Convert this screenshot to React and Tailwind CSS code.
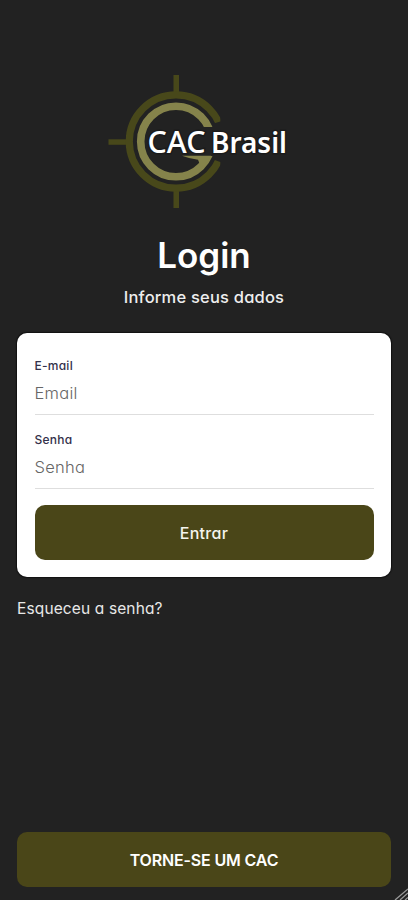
function Logo() {
  return (
    <svg className="block h-[144px] w-[192px]" viewBox="104 70 192 144" role="img" aria-label="CAC Brasil">
      <defs>
        <clipPath id="outerGap">
          <path d="M104 70H220.3V121.5L212 124H176V159H212L220.3 162V214H104Z" />
        </clipPath>
        <clipPath id="innerGap">
          <path d="M104 70H296V127H176V156H296V214H104Z" />
        </clipPath>
      </defs>
      <g fill="#48481a">
        <rect x="173.5" y="75" width="5.5" height="18" />
        <rect x="173.5" y="190" width="5.5" height="18" />
        <rect x="108.5" y="139.3" width="18" height="5.5" />
      </g>
      <circle cx="176" cy="141.5" r="46.7" fill="none" stroke="#48481a" strokeWidth="7.2" clipPath="url(#outerGap)" />
      <circle cx="176" cy="141.5" r="35.3" fill="none" stroke="#85834b" strokeWidth="7.6" clipPath="url(#innerGap)" />
      <g fill="#fff" stroke="#1b1b1b" strokeWidth="3" paintOrder="stroke" className="font-['Noto_Sans',sans-serif] text-[30px] font-medium">
        <text x="147.5" y="153.2" textLength="58" lengthAdjust="spacingAndGlyphs">CAC</text>
        <text x="211" y="153.2" textLength="76" lengthAdjust="spacingAndGlyphs" className="text-[29.5px] font-semibold">Brasil</text>
      </g>
      <path d="M182 155.8H211L208 162L201 167L198 159.8Q190 159 182 155.8Z" fill="#85834b" />
    </svg>
  );
}

function Field({ label, type, placeholder }) {
  return (
    <label className="block h-[74px] border-b border-[#dedede] pt-[17px]">
      <span className="block h-[16px] text-[12px] leading-[16px] font-medium tracking-[0.25px] text-[#33304a]">{label}</span>
      <input
        type={type}
        placeholder={placeholder}
        className="mt-[1px] block h-[36px] w-full bg-transparent text-[16.5px] font-light tracking-[0.25px] text-[#333] outline-none placeholder:text-[#666]"
      />
    </label>
  );
}

export default function App() {
  return (
    <main className="relative flex h-[900px] w-full flex-col bg-[#222] px-[17px] pt-[70px] font-[Inter,sans-serif] text-white [font-feature-settings:'cv11']">
      <header className="flex flex-col items-center">
        <div className="mr-[8px]">
          <Logo />
        </div>
        <h1 className="mt-[19px] text-[35px] leading-[44px] font-semibold">Login</h1>
        <p className="mt-[9px] text-[16.5px] leading-[22px] font-medium tracking-[0.2px] text-[#eee]">Informe seus dados</p>
      </header>
      <form className="mt-[25px] h-[244px] rounded-[10px] bg-white px-[17.5px] pt-[8px] shadow-[0_0_1px_1px_#111]">
        <Field label="E-mail" type="text" placeholder="Email" />
        <Field label="Senha" type="password" placeholder="Senha" />
        <button type="button" className="mt-[16px] h-[55px] w-full rounded-[10px] bg-[#4a4618] pt-px text-[16px] font-medium tracking-[0.3px] text-[#f5f5ee]">
          Entrar
        </button>
      </form>
      <a className="mt-[20px] self-start text-[15.5px] leading-[24px] tracking-[0.13px] text-[#e8e8e8]">Esqueceu a senha?</a>
      <button type="button" className="mt-auto mb-[13px] h-[55px] shrink-0 rounded-[10px] bg-[#4a4618] text-[16px] font-semibold tracking-[-0.15px]">
        TORNE-SE UM CAC
      </button>
      <svg className="absolute right-0 bottom-0 h-[12px] w-[14px]" viewBox="0 0 14 12" stroke="#999" strokeWidth="1.3">
        <path d="M1 12L14 1M6 12L14 5M11 12L14 9.5" />
      </svg>
    </main>
  );
}
